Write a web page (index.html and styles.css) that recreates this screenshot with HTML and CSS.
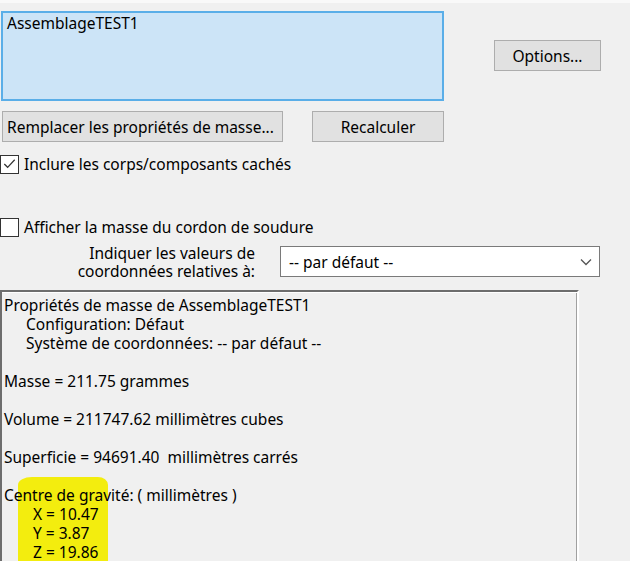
FILE: index.html
```html
<!DOCTYPE html>
<html lang="fr">
<head>
<meta charset="utf-8">
<title>Propriétés de masse</title>
<link rel="stylesheet" href="styles.css">
</head>
<body>
<div class="topstrip"></div>
<div class="row-top">
  <div class="namebox">AssemblageTEST1</div>
  <button class="btn btn-options">Options...</button>
</div>
<div class="row-buttons">
  <button class="btn btn-replace">Remplacer les propriétés de masse...</button>
  <button class="btn btn-recalc">Recalculer</button>
</div>
<label class="check check-1">
  <span class="box">
    <svg width="18" height="18" viewBox="0 0 18 18"><polyline points="3.5,9 7,12.5 14.5,4.5" fill="none" stroke="#333" stroke-width="1.3"/></svg>
  </span>
  <span>Inclure les corps/composants cachés</span>
</label>
<label class="check check-2">
  <span class="box"></span>
  <span>Afficher la masse du cordon de soudure</span>
</label>
<div class="row-coord">
  <div class="coord-label">Indiquer les valeurs de<br>coordonnées relatives à:</div>
  <div class="select">
    <span>-- par défaut --</span>
    <svg class="chev" width="12" height="8" viewBox="0 0 12 8"><polyline points="1,1.5 6,6.5 11,1.5" fill="none" stroke="#555" stroke-width="1.3"/></svg>
  </div>
</div>
<div class="panel">
  <div class="hilite"></div>
  <div class="lines">
    <div class="ln">Propriétés de masse de AssemblageTEST1</div>
    <div class="ln ind1">Configuration: Défaut</div>
    <div class="ln ind1">Système de coordonnées: -- par défaut --</div>
    <div class="ln">&nbsp;</div>
    <div class="ln">Masse = 211.75 grammes</div>
    <div class="ln">&nbsp;</div>
    <div class="ln">Volume = 211747.62 millimètres cubes</div>
    <div class="ln">&nbsp;</div>
    <div class="ln">Superficie = 94691.40&nbsp; millimètres carrés</div>
    <div class="ln">&nbsp;</div>
    <div class="ln">Centre de gravité: ( millimètres )</div>
    <div class="ln ind2">X = 10.47</div>
    <div class="ln ind2">Y = 3.87</div>
    <div class="ln ind2">Z = 19.86</div>
  </div>
</div>
</body>
</html>
```

FILE: styles.css
```css
html, body {
  margin: 0;
  padding: 0;
  background: #f0f0f0;
  overflow: hidden;
}
body {
  width: 630px;
  height: 561px;
  font-family: "Noto Sans", "Open Sans", "DejaVu Sans", sans-serif;
  font-size: 15.5px;
  color: #000;
}
.topstrip {
  height: 3px;
  background: #f9f9f9;
}
.row-top {
  display: flex;
  align-items: flex-start;
  padding-top: 8px;
  padding-left: 1px;
}
.namebox {
  box-sizing: border-box;
  width: 443px;
  height: 90px;
  background: #cce4f7;
  border: 2px solid #5aaee8;
  padding: 1px 4px;
  line-height: 19px;
}
.btn {
  box-sizing: border-box;
  height: 31px;
  background: #e1e1e1;
  border: 1px solid #adadad;
  font-family: inherit;
  font-size: 15.5px;
  color: #000;
  padding: 0;
  border-radius: 0;
}
.btn-options {
  width: 107px;
  margin-left: 50px;
  margin-top: 29px;
}
.row-buttons {
  display: flex;
  padding-top: 10px;
  padding-left: 2px;
}
.btn-replace {
  width: 281px;
  text-align: left;
  padding-left: 4px;
}
.btn-recalc {
  width: 132px;
  margin-left: 29px;
}
.check {
  display: flex;
  align-items: center;
  gap: 5px;
  height: 20px;
}
.check-1 {
  margin-top: 12px;
}
.check-2 {
  margin-top: 43px;
}
.box {
  box-sizing: border-box;
  width: 19px;
  height: 19px;
  border: 1px solid #333;
  background: #fff;
  display: flex;
  align-items: center;
  justify-content: center;
  flex: none;
}
.check-1 .box svg {
  display: block;
}
.row-coord {
  display: flex;
  align-items: flex-start;
  margin-top: 9px;
  height: 31px;
}
.coord-label {
  width: 255px;
  text-align: right;
  line-height: 18px;
  margin-top: -2px;
}
.select {
  box-sizing: border-box;
  margin-left: 25px;
  width: 320px;
  height: 31px;
  background: #fff;
  border: 1px solid #7a7a7a;
  display: flex;
  align-items: center;
  justify-content: space-between;
  padding: 0 7px 0 8px;
}
.chev {
  display: block;
}
.panel {
  position: relative;
  box-sizing: border-box;
  margin-top: 13px;
  width: 579px;
  height: 400px;
  border-top: 2px solid #6d6d6d;
  border-left: 2px solid #6d6d6d;
  border-right: 2px solid #ffffff;
  box-shadow: inset 0 1px 0 #fff, inset -1px 0 0 #a0a0a0;
  padding: 4px 2px 0 2px;
}
.hilite {
  position: absolute;
  left: 16px;
  top: 185px;
  width: 90px;
  height: 200px;
  background: #f3ed0e;
  border-radius: 14px 10px 0 0 / 8px 8px 0 0;
}
.lines {
  position: relative;
}
.ln {
  line-height: 19px;
  white-space: pre;
}
.ind1 {
  padding-left: 22px;
}
.ind2 {
  padding-left: 29px;
}
```
